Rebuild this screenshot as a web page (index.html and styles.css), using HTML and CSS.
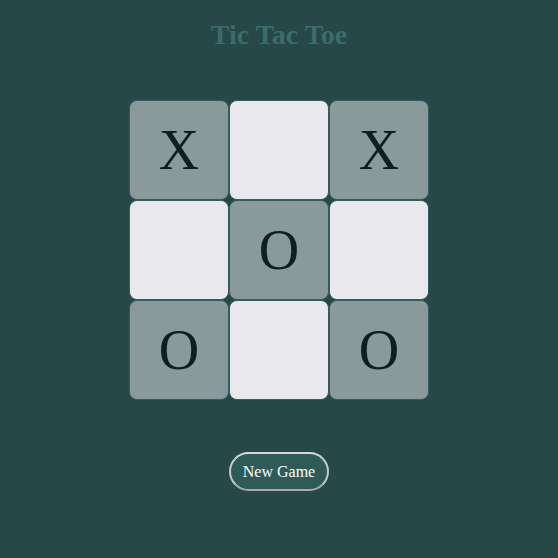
FILE: index.html
```html
<!DOCTYPE html>
<html>
<head>
<meta charset="utf-8">
<link rel="stylesheet" href="styles.css">
</head>
<body>
<main class="app">
  <h1 class="title">Tic Tac Toe</h1>
  <div class="board">
    <div class="cell filled">X</div>
    <div class="cell"></div>
    <div class="cell filled">X</div>
    <div class="cell"></div>
    <div class="cell filled">O</div>
    <div class="cell"></div>
    <div class="cell filled">O</div>
    <div class="cell"></div>
    <div class="cell filled">O</div>
  </div>
  <button class="new-game">New Game</button>
</main>
</body>
</html>
```
FILE: styles.css
```css
html, body {
  margin: 0;
  padding: 0;
  background: #274848;
  height: 100%;
}
.app {
  display: flex;
  flex-direction: column;
  align-items: center;
  font-family: "Liberation Serif", "Times New Roman", serif;
}
.title {
  margin: 19px 0 50px;
  font-size: 28px;
  line-height: 32px;
  font-weight: bold;
  color: #3b6b6b;
}
.board {
  display: grid;
  grid-template-columns: repeat(3, 100px);
  grid-template-rows: repeat(3, 100px);
  margin-top: -1px;
}
.cell {
  box-sizing: border-box;
  border: 1px solid #2f5e5c;
  border-radius: 8px;
  background: #e9e8ed;
  display: flex;
  align-items: center;
  justify-content: center;
  font-size: 56px;
  color: #0f1f1f;
}
.cell.filled {
  background: #8a9a9a;
}
.new-game {
  margin-top: 52px;
  box-sizing: border-box;
  width: 100px;
  height: 39px;
  border: 2px solid #c8c8c8;
  border-top-color: #d8d8d8;
  border-bottom-color: #a8a8a8;
  border-radius: 20px;
  background: #2e5a58;
  color: #ffffff;
  font-family: "Liberation Serif", "Times New Roman", serif;
  font-size: 16px;
  padding: 0;
}
```
